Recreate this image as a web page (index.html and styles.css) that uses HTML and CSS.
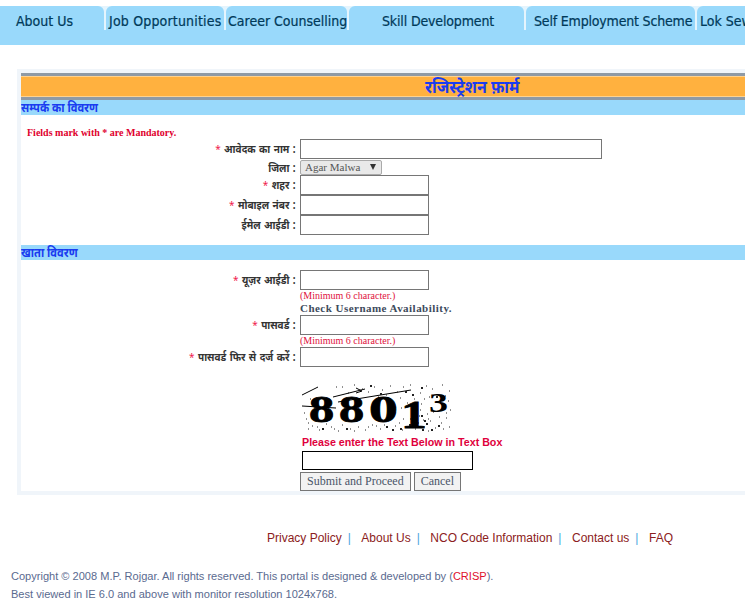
FILE: index.html
```html
<!DOCTYPE html>
<html>
<head>
<meta charset="utf-8">
<title>Registration Form</title>
<link rel="stylesheet" href="styles.css">
</head>
<body>
<nav class="nav">
  <a class="tab tab-about">About Us</a>
  <a class="tab tab-job">Job Opportunities</a>
  <a class="tab tab-career">Career Counselling</a>
  <a class="tab tab-skill">Skill Development</a>
  <a class="tab tab-self">Self Employment Scheme</a>
  <a class="tab tab-lok">Lok Sewa Guarantee</a>
</nav>
<main class="panel">
  <div class="title-bar"><span>रजिस्ट्रेशन फ़ार्म</span></div>
  <h2 class="section"><span>सम्पर्क का विवरण</span></h2>
  <p class="mandatory">Fields mark with * are Mandatory.</p>
  <div class="rows rows-contact">
    <div class="row"><label class="lbl"><i>*</i> आवेदक का नाम :</label><input class="field wide" type="text"></div>
    <div class="row row-sel"><label class="lbl">जिला :</label><span class="select">Agar Malwa<b class="arrow"></b></span></div>
    <div class="row"><label class="lbl"><i>*</i> शहर :</label><input class="field" type="text"></div>
    <div class="row"><label class="lbl"><i>*</i> मोबाइल नंबर :</label><input class="field" type="text"></div>
    <div class="row"><label class="lbl">ईमेल आईडी :</label><input class="field" type="text"></div>
  </div>
  <h2 class="section"><span>खाता विवरण</span></h2>
  <div class="rows rows-account">
    <div class="row"><label class="lbl"><i>*</i> यूज़र आईडी :</label><input class="field" type="text"></div>
    <div class="hint">(Minimum 6 character.)</div>
    <div class="check">Check Username Availability.</div>
    <div class="row"><label class="lbl"><i>*</i> पासवर्ड :</label><input class="field" type="text"></div>
    <div class="hint">(Minimum 6 character.)</div>
    <div class="row"><label class="lbl"><i>*</i> पासवर्ड फिर से दर्ज करें :</label><input class="field" type="text"></div>
  </div>
  <div class="captcha-block">
    <svg class="captcha" width="150" height="50" viewBox="0 0 150 50">
      <path class="noise" d="M0 12 16 4 M31 14 63 6 M36 19 109 7 M0 23 34 25 M60 8 54 5 M60 8 54 10" />
      <path class="dots" d="M40 4h1M52 2h1M66 9h1M72 4h1M80 7h1M88 3h1M95 9h1M101 4h1M108 2h1M118 10h1M124 3h1M130 6h1M140 2h1M147 8h1M146 18h1M148 27h1M144 35h1M147 44h1M139 40h1M133 45h1M128 38h1M122 44h1M117 33h1M112 28h1M108 36h1M104 44h1M99 25h1M93 43h1M86 36h1M78 46h1M70 42h1M63 47h1M56 44h1M48 46h1M40 42h1M32 46h1M24 41h1M17 47h1M10 43h1M4 36h1M6 46h1M2 30h1M112 16h1M105 20h1M98 15h1M119 21h1M116 40h1M125 31h1M131 29h1M137 34h1M141 24h1M60 6h1M46 10h1M84 12h1M34 4h1M22 16h1M8 16h1M76 14h1M12 30h1M6 40h1M15 44h1M29 44h1M36 48h1M52 48h1M66 44h1M74 43h1M82 42h1M97 40h1M101 36h1M121 37h1M126 36h1M118 27h1M122 16h1M127 14h1M143 13h1M144 30h1M141 46h1M126 48h1M113 46h1M110 40h1M100 47h1" />
      <path class="dots dots-big" d="M110 12h2M114 27h2M124 41h2M129 47h2M136 43h2M120 47h2M107 42h2M90 47h2M44 46h2M20 46h2M68 3h2M78 11h2M103 9h2M119 5h2M134 14h2M122 38h2M119 33h2M98 46h2M84 44h2" />
      <text class="cap-d" transform="translate(7 39) scale(1.36 1)">8</text>
      <text class="cap-d" transform="translate(37 39) scale(1.36 1)">8</text>
      <text class="cap-d" transform="translate(67 39) scale(1.56 1)">0</text>
      <text class="cap-1" transform="translate(99 45) scale(1.25 1)">1</text>
      <text class="cap-s" transform="translate(127 29) scale(1.36 1)">3</text>
    </svg>
    <div class="cap-msg">Please enter the Text Below in Text Box</div>
    <input class="cap-input" type="text">
    <div class="buttons">
      <button class="btn" type="button">Submit and Proceed</button>
      <button class="btn" type="button">Cancel</button>
    </div>
  </div>
</main>
<footer class="foot">
  <div class="foot-links">
    <a>Privacy Policy</a><s>|</s><a>About Us</a><s>|</s><a>NCO Code Information</a><s>|</s><a>Contact us</a><s>|</s><a>FAQ</a>
  </div>
  <p class="copy">Copyright © 2008 M.P. Rojgar. All rights reserved. This portal is designed &amp; developed by (<em>CRISP</em>).</p>
  <p class="copy copy-2">Best viewed in IE 6.0 and above with monitor resolution 1024x768.</p>
</footer>
</body>
</html>
```
FILE: styles.css
```css
html, body { margin: 0; padding: 0; overflow: hidden; height: 603px; background: #fff; }
body { font-family: "Liberation Serif", serif; }
.nav { display: flex; gap: 2px; height: 39px; margin-top: 6px; background: linear-gradient(#e4f4fd 24px, #99d9fb 24px); white-space: nowrap; overflow: hidden; }
.tab { display: block; flex: none; height: 24px; box-sizing: border-box; font: 14px/30px "DejaVu Sans Condensed", "DejaVu Sans", sans-serif; color: #003a5a; -webkit-text-stroke: .2px #003a5a; background: #99d9fb; border-radius: 6px 6px 0 0; }
.tab-about { width: 104px; padding-left: 16px; border-top-left-radius: 0; }
.tab-job { width: 118px; padding-left: 3px; letter-spacing: .18px; }
.tab-career { width: 121px; padding-left: 2px; }
.tab-skill { width: 175px; padding-left: 33px; letter-spacing: -.15px; }
.tab-self { width: 169px; padding-left: 8px; letter-spacing: -.18px; }
.tab-lok { width: 100px; padding-left: 3px; }
.panel { width: 760px; margin: 24px 0 0 17px; background: #fff; border: 4px solid #f0f5fa; border-right: 0; }
.title-bar { height: 21px; background: #ffb13f; border-top: 3px solid #8f9aa5; border-bottom: 3px solid #8f9aa5; box-shadow: inset 0 1px 0 #ffd28e, inset 0 -1px 0 #ffd28e; padding-left: 404px; }
.title-bar span { display: inline-block; font: bold 18px/20px "Noto Sans", "DejaVu Sans", sans-serif; color: #1a3cf0; transform: scaleX(.89); transform-origin: left; white-space: nowrap; }
.section { margin: 0; height: 15px; background: #99d9fb; font: bold 13px/14px "Noto Sans", "DejaVu Sans", sans-serif; color: #1a3cf0; }
.section span { display: inline-block; transform: scaleX(.855); transform-origin: left; white-space: nowrap; }
.mandatory { margin: 0; padding: 12px 0 0 6px; height: 12px; font: bold 10px/12px "Liberation Serif", serif; color: #e0002d; }
.rows-contact { padding-bottom: 10px; }
.rows-account { padding-top: 10px; }
.row { display: flex; height: 20px; align-items: center; }
.row-sel { height: 16px; align-items: flex-end; }
.lbl { flex: none; box-sizing: content-box; width: 274px; text-align: right; padding-right: 5px; font: bold 11.5px/14px "Noto Sans", "DejaVu Sans", sans-serif; word-spacing: 1px; color: #333; transform: scaleX(.87); transform-origin: right center; white-space: nowrap; }
.lbl i { font-style: normal; font-weight: normal; color: #f0204c; }
.field { box-sizing: border-box; width: 129px; height: 20px; margin: 0; border: 1px solid #767676; background: #fff; padding: 0; }
.wide { width: 302px; }
.select { box-sizing: border-box; position: relative; display: block; width: 82px; height: 15px; background: #e9e9e9; border: 1px solid #aaa; border-radius: 2px; padding-left: 4px; font: 11px/13px "Liberation Serif", serif; color: #555; }
.arrow { position: absolute; right: 5px; top: 3px; width: 0; height: 0; border: 3.5px solid transparent; border-top: 6px solid #333; border-bottom: 0; }
.hint { margin-left: 279px; height: 12px; font: 10px/12px "Liberation Serif", serif; color: #e0103c; }
.check { margin-left: 279px; height: 13px; font: bold 11px/13px "Liberation Serif", serif; letter-spacing: .47px; color: #3d4a5c; }
.captcha-block { padding: 16px 0 0 279px; }
.captcha { display: block; margin-left: 2px; background: #fff; overflow: hidden; }
.noise { stroke: #000; stroke-width: 1; fill: none; }
.dots { stroke: #222; stroke-width: 1; fill: none; }
.dots-big { stroke-width: 2; }
.cap-d { font: bold 37px "Liberation Serif", serif; fill: #000; stroke: #000; stroke-width: .8px; }
.cap-1 { font: bold 41px "Liberation Serif", serif; fill: #000; stroke: #000; stroke-width: .8px; }
.cap-s { font: bold 28px "Liberation Serif", serif; fill: #000; }
.cap-msg { margin: 3px 0 0 2px; height: 13px; font: bold 10.7px/13px "Liberation Sans", sans-serif; color: #e0003c; white-space: nowrap; }
.cap-input { display: block; box-sizing: border-box; margin: 2px 0 0 2px; width: 171px; height: 19px; border: 1px solid #000; padding: 0; background: #fff; }
.buttons { display: flex; gap: 3px; margin-top: 2px; }
.btn { box-sizing: border-box; height: 19px; padding: 0 6px 1px; margin: 0; background: #f2f2f2; border: 1px solid #767676; font: 12px/15px "Liberation Serif", serif; color: #4a5568; }
.foot { font-family: "Liberation Sans", sans-serif; }
.foot-links { margin: 35px 0 0 267px; height: 16px; font-size: 12px; line-height: 16px; color: #8b2020; white-space: nowrap; }
.foot-links s { text-decoration: none; color: #4aa6e0; margin: 0 10.5px 0 6px; }
.copy { margin: 23px 0 0 11px; font-size: 11.05px; line-height: 14px; color: #5a6a8f; }
.copy-2 { margin-top: 4px; }
.copy em { font-style: normal; color: #e0102c; }
```
